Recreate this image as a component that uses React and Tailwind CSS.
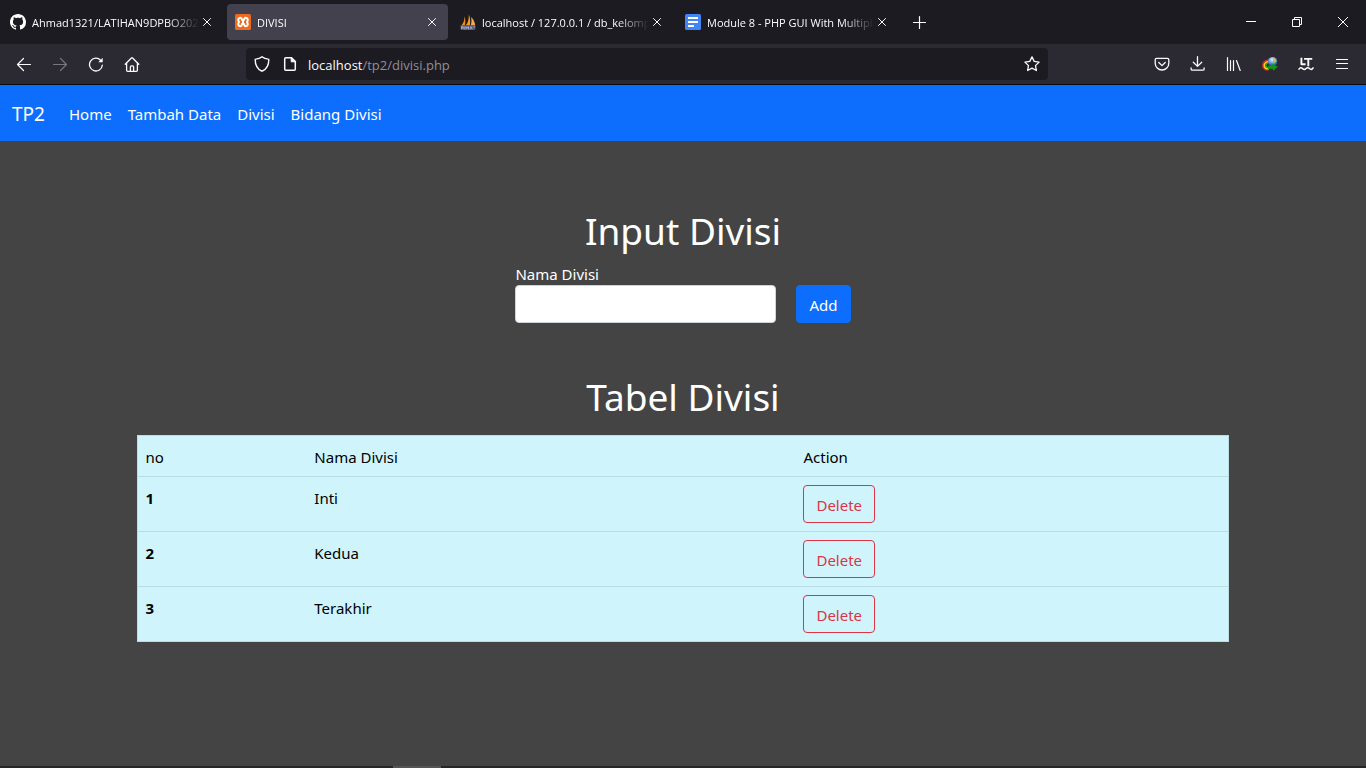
import React from "react";

function GithubIcon() {
  return (
    <svg viewBox="0 0 16 16" className="size-4 shrink-0" fill="#fff" aria-hidden="true">
      <path d="M8 0C3.58 0 0 3.58 0 8c0 3.54 2.29 6.53 5.47 7.59.4.07.55-.17.55-.38 0-.19-.01-.82-.01-1.49-2.01.37-2.53-.49-2.69-.94-.09-.23-.48-.94-.82-1.13-.28-.15-.68-.52-.01-.53.63-.01 1.08.58 1.23.82.72 1.21 1.87.87 2.33.66.07-.52.28-.87.51-1.07-1.78-.2-3.64-.89-3.64-3.95 0-.87.31-1.59.82-2.15-.08-.2-.36-1.02.08-2.12 0 0 .67-.21 2.2.82.64-.18 1.32-.27 2-.27s1.36.09 2 .27c1.53-1.04 2.2-.82 2.2-.82.44 1.1.16 1.92.08 2.12.51.56.82 1.27.82 2.15 0 3.07-1.87 3.75-3.65 3.95.29.25.54.73.54 1.48 0 1.07-.01 1.93-.01 2.2 0 .21.15.46.55.38A8.01 8.01 0 0 0 16 8c0-4.42-3.58-8-8-8z" />
    </svg>
  );
}

function XamppIcon() {
  return (
    <svg viewBox="0 0 16 16" className="size-4 shrink-0" aria-hidden="true">
      <rect width="16" height="16" rx="1.5" fill="#ec6c1f" />
      <path
        d="M4.600 3.900c1.500-.2 2.300.6 2.400 2.100h2c.1-1.500.9-2.300 2.400-2.100 1.500.2 1.800 2.100.6 4.100 1.200 2 .9 3.900-.6 4.100-1.500.2-2.300-.6-2.400-2.100H7c-.1 1.500-.9 2.300-2.400 2.100C3.100 11.900 2.800 10 4 8 2.800 6 3.100 4.100 4.600 3.900z"
        fill="none"
        stroke="#fff"
        strokeWidth="2"
        strokeLinejoin="round"
      />
      <path d="M7 6.500h2v3H7z" fill="#fff" />
    </svg>
  );
}

function PmaIcon() {
  return (
    <svg viewBox="0 0 16 16" className="size-4 shrink-0" aria-hidden="true">
      <path d="M4.400 2.200C4.600 6 3.600 9.200 1 11.800h3.800C5.600 8.500 5.600 5 4.400 2.200z" fill="#e98a1c" />
      <path d="M8.800.4C9 5 8 8.800 5.600 11.600h4.200C10.600 8 10.300 3.600 8.800.4z" fill="#f89c1c" />
      <path d="M11 3c2.600 2.300 4 5.200 4.200 8.600h-4.600C11.600 9 11.800 6 11 3z" fill="#f6a94a" />
      <path d="M.4 11.500h15.200l-.3 4.200H.8z" fill="#5a5e80" />
      <path d="M1.500 15.200v-2.400h1.600v1.400H1.800M4.200 15.600v-3M6 15.600v-3l1.200 1.600 1.200-1.600v3M10 15.400l1-2.800 1.100 2.800M13.400 12.800h1.400" stroke="#b6b8d2" strokeWidth=".8" fill="none" />
    </svg>
  );
}

function DocsIcon() {
  return (
    <svg viewBox="0 0 16 16" className="size-4 shrink-0" aria-hidden="true">
      <rect width="16" height="16" rx="1.5" fill="#4285f4" />
      <path d="M3 3h10v2H3zM3 7h10v2H3zM3 11h6v2H3z" fill="#fff" />
    </svg>
  );
}

function Stroke({ children, className = "size-4 text-[#fbfbfe]", w = 1.2 }) {
  return (
    <svg viewBox="0 0 16 16" className={className} fill="none" stroke="currentColor" strokeWidth={w} strokeLinecap="round" strokeLinejoin="round" aria-hidden="true">
      {children}
    </svg>
  );
}

const tabs = [
  { title: "Ahmad1321/LATIHAN9DPBO2022", icon: <GithubIcon /> },
  { title: "DIVISI", icon: <XamppIcon />, active: true },
  { title: "localhost / 127.0.0.1 / db_kelompok", icon: <PmaIcon /> },
  { title: "Module 8 - PHP GUI With Multiple", icon: <DocsIcon /> },
];

function Tab({ title, icon, active }) {
  return (
    <div className={`flex h-9 w-[221px] min-w-0 items-center rounded pl-2 pr-2 ${active ? "bg-[#42414d]" : ""}`}>
      {icon}
      <button
        type="button"
        className="ml-1.5 min-w-0 flex-1 overflow-hidden whitespace-nowrap pt-px text-left text-[11px] leading-4 text-[#fbfbfe] [mask-image:linear-gradient(to_left,transparent,black_32px)]"
      >
        {title}
      </button>
      <button type="button" aria-label={`Close ${title}`} className="flex w-4 shrink-0 justify-center">
        <Stroke className="size-4 text-[#fbfbfe]" w={1}>
          <path d="M4.500 4.500l7 7M11.500 4.500l-7 7" />
        </Stroke>
      </button>
    </div>
  );
}

function TabBar() {
  return (
    <div className="flex h-11 items-center bg-[#1c1b22] font-['Open_Sans','Noto_Sans',sans-serif]">
      <div className="flex min-w-0 gap-1 pl-0.5">
        {tabs.map((t) => (
          <Tab key={t.title} {...t} />
        ))}
      </div>
      <button type="button" aria-label="New tab" className="ml-1 flex h-9 w-9 shrink-0 items-center justify-center">
        <Stroke w={1.2}>
          <path d="M7.500 2.500v12M1.500 8.500h12" />
        </Stroke>
      </button>
      <div className="ml-auto flex h-full shrink-0">
        <button type="button" aria-label="Minimize" className="flex w-[46px] items-center justify-center">
          <svg viewBox="0 0 10 10" className="size-2.5" stroke="#fff" fill="none"><path d="M0 4.500h10" /></svg>
        </button>
        <button type="button" aria-label="Restore" className="flex w-[46px] items-center justify-center">
          <svg viewBox="0 0 10 10" className="size-2.5" stroke="#fff" fill="none"><path d="M.5 2.500h7v7h-7zM2.500 2.500v-2h7v7h-2" /></svg>
        </button>
        <button type="button" aria-label="Close window" className="flex w-[46px] items-center justify-center">
          <svg viewBox="0 0 10 10" className="size-2.5" stroke="#fff" fill="none"><path d="M0 0l10 10M10 0L0 10" /></svg>
        </button>
      </div>
    </div>
  );
}

function ToolButton({ label, children }) {
  return (
    <button type="button" aria-label={label} className="flex h-8 w-9 shrink-0 items-center justify-center">
      {children}
    </button>
  );
}

function Toolbar() {
  return (
    <div className="flex h-[41px] items-center border-b border-[#0c0c0d] bg-[#2b2a33] px-1.5 font-['Open_Sans','Noto_Sans',sans-serif]">
      <ToolButton label="Back">
        <Stroke><path d="M1.500 8.500h13M7.500 2.500l-6 6 6 6" /></Stroke>
      </ToolButton>
      <ToolButton label="Forward">
        <Stroke className="size-4 text-[#77767d]"><path d="M1.500 8.500h13M8.500 2.500l6 6-6 6" /></Stroke>
      </ToolButton>
      <ToolButton label="Reload">
        <Stroke w={1.3}>
          <path d="M14.300 9.200A6.400 6.400 0 1 1 12.600 4.200" />
          <path d="M14.700 1.800v4.400h-4.400z" fill="currentColor" stroke="none" />
        </Stroke>
      </ToolButton>
      <ToolButton label="Home">
        <Stroke w={1.3}>
          <path d="M1.200 8.200L7.400 2a.9.9 0 0 1 1.200 0l6.200 6.200M2.600 7.200v7c0 .7.400 1.100 1.100 1.100h8.600c.7 0 1.100-.4 1.100-1.100v-7M6.400 15v-4.200c0-.6.400-1 1-1h1.200c.6 0 1 .4 1 1V15" />
        </Stroke>
      </ToolButton>
      <div className="w-24 shrink" />
      <div className="flex h-8 min-w-0 flex-1 items-center rounded bg-[#1c1b22] px-2">
        <Stroke w={1.4}>
          <path d="M8 .8C6.400 2.100 4 2.900 1.700 3.100c-.3 0-.5.3-.5.600 0 5.300 2.200 9.300 6.400 11.300.3.100.5.100.8 0 4.200-2 6.400-6 6.400-11.300 0-.3-.2-.6-.5-.6C12 2.900 9.600 2.100 8 .8z" />
        </Stroke>
        <div className="ml-3 flex">
          <Stroke w={1.5}>
            <path d="M9.500 1.700H3.700c-.6 0-1 .4-1 1v10.600c0 .6.400 1 1 1h8.600c.6 0 1-.4 1-1V5.500z" />
            <path d="M9.200 1.500v4.300h4.300z" fill="currentColor" strokeWidth="1" />
          </Stroke>
        </div>
        <div className="ml-2.5 min-w-0 flex-1 truncate pt-0.5 text-[13px] leading-5 text-[#8f8f98]">
          <span className="text-[#fbfbfe]">localhost</span>/tp2/divisi.php
        </div>
        <button type="button" aria-label="Bookmark this page">
          <Stroke w={1.3}>
            <path d="M8 .9l2.200 4.500 4.900.7-3.600 3.500.9 4.900L8 12.200l-4.400 2.300.9-4.900L.9 6.100l4.900-.7z" />
          </Stroke>
        </button>
      </div>
      <div className="w-24 shrink" />
      <ToolButton label="Save to Pocket">
        <Stroke w={1.3}>
          <path d="M2.600 2.300h10.800c.8 0 1.400.6 1.400 1.400v3.500a6.800 6.800 0 0 1-13.600 0V3.700c0-.8.6-1.400 1.400-1.400zM4.800 6.500L8 9.600l3.200-3.100" />
        </Stroke>
      </ToolButton>
      <ToolButton label="Downloads">
        <Stroke w={1.3}><path d="M7.500.7v9.600M3.300 6.200l4.200 4.200 4.200-4.200M1.100 11.800v1.100c0 .8.500 1.300 1.300 1.300h10.400c.8 0 1.300-.5 1.300-1.300v-1.100" /></Stroke>
      </ToolButton>
      <ToolButton label="Library">
        <Stroke w={1.2}><path d="M1.500 1.500v13M4.500 4.500v10M7.500 4.500v10M10.500 4.500l3.700 10" /></Stroke>
      </ToolButton>
      <ToolButton label="Internet Download Manager">
        <svg viewBox="0 0 16 16" className="size-4" aria-hidden="true">
          <defs>
            <radialGradient id="globe" cx=".45" cy=".3" r=".7">
              <stop offset="0" stopColor="#e4f1fb" />
              <stop offset=".45" stopColor="#76a9df" />
              <stop offset="1" stopColor="#1c4f9e" />
            </radialGradient>
          </defs>
          <path d="M6.500 4.100C2.800 4.900.6 7 .9 9.800c.3 2.600 2.600 4.300 5.500 4.100" fill="none" stroke="#e0261c" strokeWidth="1.5" />
          <path d="M6.600 5.500C3.800 6.200 2.100 7.900 2.300 9.800c.2 1.800 2 3 4.600 2.900" fill="none" stroke="#f4d516" strokeWidth="1.7" />
          <path d="M6.600 6.900C4.800 7.500 3.700 8.600 3.900 9.800c.3 1.300 1.700 1.800 3.600 1.800" fill="none" stroke="#23a12c" strokeWidth="1.4" />
          <circle cx="10.600" cy="5.600" r="4.600" fill="url(#globe)" />
          <path d="M11.500 2c1.600.2 2.500 1.300 3 2.700l-1.700 2.200-1.500-1.700z" fill="#c4c04d" />
          <path d="M6 9.500l3 .2V7.600l6.900 3.200-4.500 3.900-.9-1.900-4.500.2z" fill="#14941b" />
        </svg>
      </ToolButton>
      <ToolButton label="LanguageTool">
        <Stroke w={1.9}>
          <path d="M3.400 2.700v5.600h3.200M7 2.900h6.300M10.300 3v6.300" strokeLinecap="square" />
          <path d="M1 13.200c1.200-1.900 2.300-1.900 3.500-.6s2.300 1.300 3.500 0 2.300-1.300 3.500 0 2.300 1.300 3.500-.6" strokeWidth="1.5" />
        </Stroke>
      </ToolButton>
      <ToolButton label="Open application menu">
        <Stroke w={1.2}><path d="M2.500 3.500h11M2.500 7.500h11M2.500 12.500h11" /></Stroke>
      </ToolButton>
    </div>
  );
}

const links = ["Home", "Tambah Data", "Divisi", "Bidang Divisi"];

function Navbar() {
  return (
    <nav className="flex h-14 items-center bg-[#0d6efd] px-3 pt-0.5 text-white">
      <a href="#" className="mr-4 text-[19px] leading-8">TP2</a>
      <ul className="flex">
        {links.map((l) => (
          <li key={l}>
            <a href="#" className="block p-2 text-[15px] leading-6">{l}</a>
          </li>
        ))}
      </ul>
    </nav>
  );
}

const rows = ["Inti", "Kedua", "Terakhir"];

export default function App() {
  return (
    <div className="flex min-h-screen flex-col bg-[#444] font-['Noto_Sans',sans-serif]">
      <header>
        <TabBar />
        <Toolbar />
      </header>
      <Navbar />
      <main className="flex-1 pt-16 pb-16 text-[15px] leading-6">
        <h1 className="mb-1 text-center text-[37px] leading-[52px] text-white">Input Divisi</h1>
        <form className="flex items-end justify-center gap-5" onSubmit={(e) => e.preventDefault()}>
          <div className="flex flex-col">
            <label htmlFor="nama" className="leading-[26px] -mb-0.5 text-white">Nama Divisi</label>
            <input id="nama" name="nama" type="text" className="h-[38px] w-[261px] rounded border border-[#ced4da] bg-white px-3 text-[#212529]" />
          </div>
          <button type="submit" className="h-[38px] rounded border border-[#0d6efd] bg-[#0d6efd] px-3 pt-0.5 text-white">Add</button>
        </form>
        <h1 className="mt-12 mb-3 text-center text-[37px] leading-[52px] text-white">Tabel Divisi</h1>
        <table className="mx-auto w-4/5 table-fixed border-collapse border border-[#badce3] bg-[#cff4fc] text-left text-black">
          <thead>
            <tr className="border-b border-[#badce3]">
              <th scope="col" className="w-[15.5%] px-2 pt-[9px] pb-[7px] font-normal">no</th>
              <th scope="col" className="w-[44.8%] px-2 pt-[9px] pb-[7px] font-normal">Nama Divisi</th>
              <th scope="col" className="px-2 pt-[9px] pb-[7px] font-normal">Action</th>
            </tr>
          </thead>
          <tbody>
            {rows.map((name, i) => (
              <tr key={name} className="border-b border-[#badce3] align-top">
                <th scope="row" className="px-2 pt-[9px] pb-[7px] font-bold">{i + 1}</th>
                <td className="px-2 pt-[9px] pb-[7px]">{name}</td>
                <td className="p-2">
                  <button type="button" className="block h-[38px] rounded border border-[#dc3545] px-3 pt-0.5 text-[#dc3545]">Delete</button>
                </td>
              </tr>
            ))}
          </tbody>
        </table>
      </main>
      <footer className="flex h-0.5 bg-[#262626]">
        <div className="ml-[393px] w-12 bg-[#555]" />
      </footer>
    </div>
  );
}
